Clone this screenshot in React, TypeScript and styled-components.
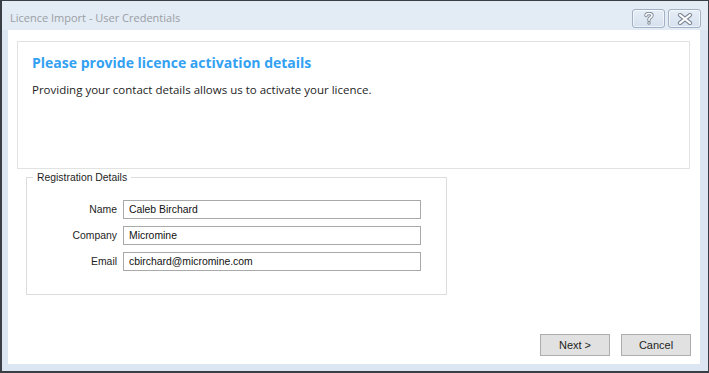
import styled, { createGlobalStyle } from "styled-components";

const GlobalStyle = createGlobalStyle`
  html, body {
    margin: 0;
    padding: 0;
    background: #ffffff;
  }
  * {
    box-sizing: border-box;
  }
`;

interface Field {
  label: string;
  value: string;
}

const fields: Field[] = [
  { label: "Name", value: "Caleb Birchard" },
  { label: "Company", value: "Micromine" },
  { label: "Email", value: "cbirchard@micromine.com" },
];

/** Little glyphs drawn on the caption buttons, white fill with a grey outline */
const HelpGlyph = () => (
  <svg width="10" height="13" viewBox="0 0 10 13">
    <path
      d="M2 3.6C2 2 3.3 1.5 5 1.5S8 2.3 8 3.6 6.8 5.3 5.8 6 5 7.2 5 8.2"
      fill="none"
      stroke="#7d8896"
      strokeWidth="3.4"
      strokeLinecap="round"
    />
    <path
      d="M2 3.6C2 2 3.3 1.5 5 1.5S8 2.3 8 3.6 6.8 5.3 5.8 6 5 7.2 5 8.2"
      fill="none"
      stroke="#ffffff"
      strokeWidth="1.6"
      strokeLinecap="round"
    />
    <circle cx="5" cy="11" r="1.7" fill="#7d8896" />
    <circle cx="5" cy="11" r="0.8" fill="#ffffff" />
  </svg>
);

const CloseGlyph = () => (
  <svg width="16" height="12" viewBox="0 0 16 12">
    <path
      d="M3 2L13 10M13 2L3 10"
      fill="none"
      stroke="#7d8896"
      strokeWidth="4.2"
      strokeLinecap="round"
    />
    <path
      d="M3 2L13 10M13 2L3 10"
      fill="none"
      stroke="#ffffff"
      strokeWidth="2.2"
      strokeLinecap="round"
    />
  </svg>
);

const App = () => {
  return (
    <>
      <GlobalStyle />
      <Window>
        <TitleBar>
          <Caption>Licence Import - User Credentials</Caption>
          <CaptionButtons>
            <CaptionButton aria-label="Help">
              <HelpGlyph />
            </CaptionButton>
            <CaptionButton aria-label="Close">
              <CloseGlyph />
            </CaptionButton>
          </CaptionButtons>
        </TitleBar>
        <Client>
          <HeaderPanel>
            <Heading>Please provide licence activation details</Heading>
            <Intro>
              Providing your contact details allows us to activate your licence.
            </Intro>
          </HeaderPanel>
          <GroupBox>
            <Legend>Registration Details</Legend>
            <FieldGrid>
              {fields.map((field) => (
                <FieldRow key={field.label}>
                  <FieldLabel>{field.label}</FieldLabel>
                  <TextBox defaultValue={field.value} />
                </FieldRow>
              ))}
            </FieldGrid>
          </GroupBox>
          <Footer>
            <DialogButton>Next &gt;</DialogButton>
            <DialogButton>Cancel</DialogButton>
          </Footer>
        </Client>
      </Window>
    </>
  );
};

export default App;

const Window = styled.div`
  width: 709px;
  height: 373px;
  display: flex;
  flex-direction: column;
  background: #dbe6f2;
  border: 1px solid #3a3f46;
  border-bottom-width: 2px;
  border-left-width: 2px;
`;

const TitleBar = styled.div`
  height: 29px;
  display: flex;
  align-items: flex-start;
  justify-content: space-between;
  padding: 0 7px 0 8px;
  background: #e3ebf4;
`;

const Caption = styled.div`
  margin-top: 9px;
  font-family: "Open Sans", "Noto Sans", sans-serif;
  font-size: 11px;
  line-height: 15px;
  color: #9a9ea4;
`;

const CaptionButtons = styled.div`
  display: flex;
  gap: 3px;
  margin-top: 8px;
`;

const CaptionButton = styled.button`
  width: 33px;
  height: 19px;
  padding: 0;
  display: flex;
  align-items: center;
  justify-content: center;
  background: linear-gradient(#e6eef7, #d6e1ee);
  border: 1px solid #a2b1c4;
  border-radius: 3px;
  box-shadow: inset 0 0 0 1px rgba(255, 255, 255, 0.6);
`;

const Client = styled.div`
  flex: 1;
  display: flex;
  flex-direction: column;
  margin: 0 8px 7px 6px;
  padding: 11px 10px 8px 9px;
  background: #ffffff;
`;

const HeaderPanel = styled.div`
  height: 128px;
  padding: 11px 14px;
  border: 1px solid #e2e2e2;
  background: #ffffff;
`;

const Heading = styled.div`
  font-family: "Open Sans", "Noto Sans", sans-serif;
  font-weight: 700;
  font-size: 14px;
  line-height: 20px;
  color: #33a1f2;
`;

const Intro = styled.div`
  margin-top: 8px;
  font-family: "Open Sans", "Noto Sans", sans-serif;
  font-size: 11.5px;
  line-height: 18px;
  color: #1e1e1e;
`;

const GroupBox = styled.fieldset`
  width: 421px;
  height: 124px;
  margin: 2px 0 0 9px;
  padding: 16px 0 0 0;
  border: 1px solid #dcdcdc;
`;

const Legend = styled.legend`
  margin-left: 6px;
  padding: 0 4px;
  font-family: "Liberation Sans", Arial, sans-serif;
  font-size: 10.4px;
  line-height: 13px;
  color: #1e1e1e;
`;

const FieldGrid = styled.div`
  display: flex;
  flex-direction: column;
  gap: 7px;
`;

const FieldRow = styled.div`
  display: grid;
  grid-template-columns: 90px 298px;
  column-gap: 6px;
  align-items: center;
`;

const FieldLabel = styled.label`
  text-align: right;
  font-family: "Liberation Sans", Arial, sans-serif;
  font-size: 10.4px;
  color: #1e1e1e;
`;

const TextBox = styled.input`
  height: 19px;
  padding: 0 5px;
  border: 1px solid #a9a9a9;
  outline: none;
  font-family: "Liberation Sans", Arial, sans-serif;
  font-size: 10.4px;
  color: #111111;
  background: #ffffff;
`;

const Footer = styled.div`
  margin: auto -1px 0 0;
  display: flex;
  justify-content: flex-end;
  gap: 11px;
`;

const DialogButton = styled.button`
  width: 70px;
  height: 22px;
  padding: 0;
  background: #e1e1e1;
  border: 1px solid #adadad;
  font-family: "Liberation Sans", Arial, sans-serif;
  font-size: 11px;
  color: #1e1e1e;
`;
